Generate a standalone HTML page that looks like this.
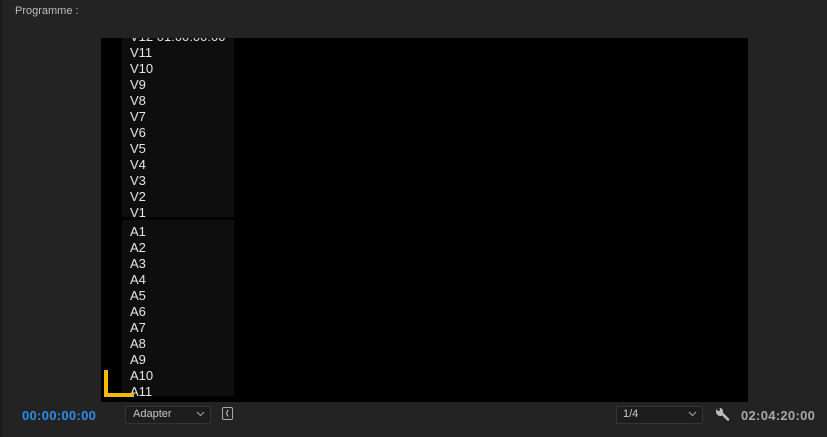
<html><head><style>
body{margin:0;width:827px;height:437px;background:#232323;position:relative;overflow:hidden;font-family:"Liberation Sans",sans-serif}
.a{position:absolute}
.row{position:absolute;left:130px;font-size:13px;color:#e6e6e6;line-height:16px}
</style></head><body>
<div class="a" style="left:0;top:0;width:2px;height:437px;background:#1b1b1b"></div>
<div class="a" style="left:15px;top:5px;font-size:11px;color:#bdbdbd">Programme :</div>
<div class="a" style="left:101px;top:38px;width:647px;height:364px;background:#000"></div>
<div class="a" style="left:122px;top:38px;width:112px;height:179px;background:#0e0e0e"></div>
<div class="a" style="left:122px;top:220px;width:112px;height:176px;background:#0e0e0e"></div>
<div class="a" style="left:122px;top:38px;width:112px;height:358px;overflow:hidden">
<div class="row" style="left:8px;top:-9px">V12 01:00:00:00</div>
<div class="row" style="left:8px;top:7px">V11</div>
<div class="row" style="left:8px;top:23px">V10</div>
<div class="row" style="left:8px;top:39px">V9</div>
<div class="row" style="left:8px;top:55px">V8</div>
<div class="row" style="left:8px;top:71px">V7</div>
<div class="row" style="left:8px;top:87px">V6</div>
<div class="row" style="left:8px;top:103px">V5</div>
<div class="row" style="left:8px;top:119px">V4</div>
<div class="row" style="left:8px;top:135px">V3</div>
<div class="row" style="left:8px;top:151px">V2</div>
<div class="row" style="left:8px;top:167px">V1</div>
<div class="row" style="left:8px;top:186px">A1</div>
<div class="row" style="left:8px;top:202px">A2</div>
<div class="row" style="left:8px;top:218px">A3</div>
<div class="row" style="left:8px;top:234px">A4</div>
<div class="row" style="left:8px;top:250px">A5</div>
<div class="row" style="left:8px;top:266px">A6</div>
<div class="row" style="left:8px;top:282px">A7</div>
<div class="row" style="left:8px;top:298px">A8</div>
<div class="row" style="left:8px;top:314px">A9</div>
<div class="row" style="left:8px;top:330px">A10</div>
<div class="row" style="left:8px;top:346px">A11</div>
</div>
<div class="a" style="left:104px;top:370px;width:4px;height:27px;background:#f2bb00"></div>
<div class="a" style="left:104px;top:393px;width:30px;height:4px;background:#f2bb00"></div>
<div class="a" style="left:22px;top:408px;font-size:13px;color:#2d8ceb;font-weight:bold;letter-spacing:0.3px">00:00:00:00</div>
<div class="a" style="left:125px;top:406px;width:84px;height:16px;border:1px solid #353535;background:#1d1d1d;border-radius:2px"></div>
<div class="a" style="left:133px;top:408px;font-size:11px;color:#c8c8c8">Adapter</div>
<svg class="a" style="left:196px;top:410px" width="10" height="8"><path d="M1 2 L4.5 5.5 L8 2" stroke="#aaa" fill="none"/></svg>
<div class="a" style="left:222px;top:407px;width:11px;height:13px;border:1px solid #aaa;border-radius:2px;box-sizing:border-box"></div>
<svg class="a" style="left:222px;top:407px" width="11" height="13"><path d="M6 3 L4.5 6.5 L6 9.5" stroke="#ccc" fill="none"/></svg>
<div class="a" style="left:616px;top:406px;width:85px;height:16px;border:1px solid #353535;background:#1d1d1d;border-radius:2px"></div>
<div class="a" style="left:623px;top:408px;font-size:11px;color:#c8c8c8">1/4</div>
<svg class="a" style="left:688px;top:410px" width="10" height="8"><path d="M1 2 L4.5 5.5 L8 2" stroke="#aaa" fill="none"/></svg>
<svg class="a" style="left:715px;top:406px" width="16" height="16"><path d="M3 3.5 A3.2 3.2 0 0 0 7.5 8 L13 13.5" stroke="#bdbdbd" stroke-width="2.6" fill="none" stroke-linecap="round"/><circle cx="5" cy="5" r="3" fill="#bdbdbd"/><circle cx="3.5" cy="3.5" r="1.5" fill="#232323"/></svg>
<div class="a" style="left:741px;top:408px;font-size:13px;color:#a8a8a8;font-weight:bold;letter-spacing:0.3px">02:04:20:00</div>
</body></html>
